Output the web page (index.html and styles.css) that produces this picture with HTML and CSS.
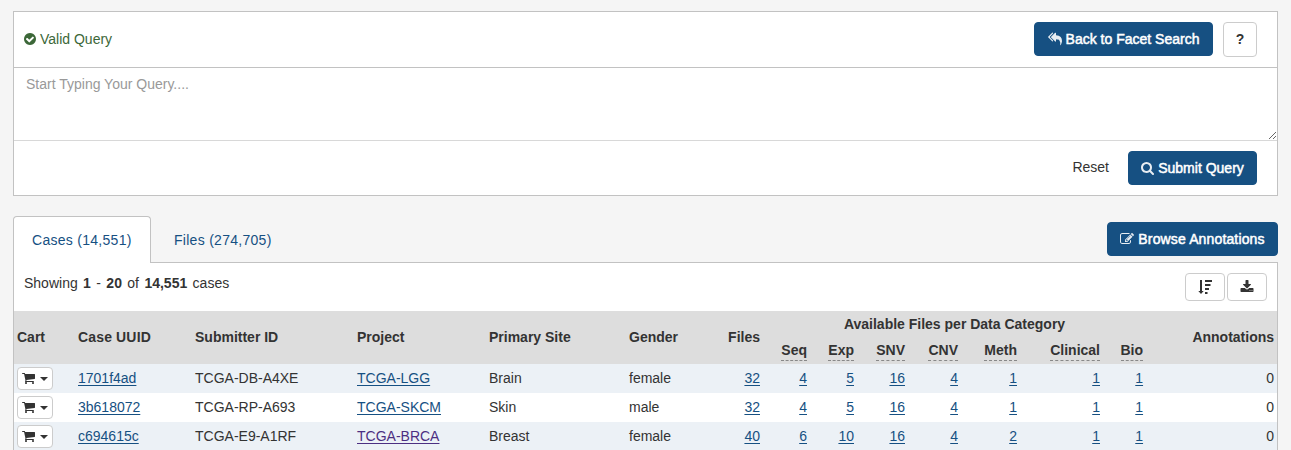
FILE: index.html
```html
<!DOCTYPE html>
<html lang="en">
<head>
<meta charset="utf-8">
<title>Advanced Search</title>
<link rel="stylesheet" href="styles.css">
</head>
<body>
<svg class="defs" aria-hidden="true">
  <symbol id="check" viewBox="128 128 1536 1536"><path d="M1412 734q0-28-18-46l-91-90q-19-19-45-19t-45 19l-408 407-226-226q-19-19-45-19t-45 19l-91 90q-18 18-18 46 0 27 18 45l362 362q19 19 45 19 27 0 46-19l543-543q18-18 18-45zm252 162q0 209-103 385.5t-279.5 279.5-385.5 103-385.5-103-279.5-279.5-103-385.5 103-385.5 279.5-279.5 385.5-103 385.5 103 279.5 279.5 103 385.5z"/></symbol>
  <symbol id="reply-all" viewBox="0 0 1792 1792"><path d="M640 1082v70q0 42-39 59-13 5-25 5-27 0-45-19l-512-512q-19-19-19-45t19-45l512-512q29-31 70-14 39 17 39 59v69l-397 398q-19 19-19 45t19 45zm1152 58q0 58-17 133.5t-38.5 138-48 125-40.5 90.5l-20 40q-8 17-28 17-6 0-9-1-25-8-23-34 43-400-106-565-64-71-170.5-110.5t-267.5-52.5v251q0 42-39 59-13 5-25 5-27 0-45-19l-512-512q-19-19-19-45t19-45l512-512q29-31 70-14 39 17 39 59v262q411 28 599 221 169 173 169 509z"/></symbol>
  <symbol id="search" viewBox="64 128 1664 1664"><path d="M1216 832q0-185-131.5-316.5t-316.5-131.5-316.5 131.5-131.5 316.5 131.5 316.5 316.5 131.5 316.5-131.5 131.5-316.5zm512 832q0 52-38 90t-90 38q-54 0-90-38l-343-342q-179 124-399 124-143 0-273.5-55.5t-225-150-150-225-55.5-273.5 55.5-273.5 150-225 225-150 273.5-55.5 273.5 55.5 225 150 150 225 55.5 273.5q0 220-124 399l343 343q37 37 37 90z"/></symbol>
  <symbol id="edit" viewBox="0 0 1792 1792"><path d="M888 1184l116-116-152-152-116 116v56h96v96h56zm440-720q-16-16-33 1l-350 350q-17 17-1 33t33-1l350-350q17-17 1-33zm80 594v190q0 119-84.5 203.5t-203.5 84.5h-832q-119 0-203.5-84.5t-84.5-203.5v-832q0-119 84.5-203.5t203.5-84.5h832q63 0 117 25 15 7 18 23 3 17-9 29l-49 49q-14 14-32 8-23-6-45-6h-832q-66 0-113 47t-47 113v832q0 66 47 113t113 47h832q66 0 113-47t47-113v-126q0-13 9-22l64-64q15-15 35-7t20 29zm-96-738l288 288-672 672h-288v-288zm444 132l-92 92-288-288 92-92q28-28 68-28t68 28l152 152q28 28 28 68t-28 68z"/></symbol>
  <symbol id="download" viewBox="0 0 1792 1792"><path d="M1344 1344q0-26-19-45t-45-19-45 19-19 45 19 45 45 19 45-19 19-45zm256 0q0-26-19-45t-45-19-45 19-19 45 19 45 45 19 45-19 19-45zm128-224v320q0 40-28 68t-68 28h-1472q-40 0-68-28t-28-68v-320q0-40 28-68t68-28h465l135 136q58 56 136 56t136-56l136-136h464q40 0 68 28t28 68zm-325-569q17 41-14 70l-448 448q-18 19-45 19t-45-19l-448-448q-31-29-14-70 17-39 59-39h256v-448q0-26 19-45t45-19h256q26 0 45 19t19 45v448h256q42 0 59 39z"/></symbol>
  <symbol id="sort" viewBox="0 0 14 14"><path d="M2 0h2v11h1.7L3 14 .3 11H2zM7 0h7v2H7zM7 4h5.5v2H7zM7 8h4v2H7zM7 12h2.5v2H7z"/></symbol>
  <symbol id="cart" viewBox="64 256 1664 1408"><path d="M704 1536q0 52-38 90t-90 38-90-38-38-90 38-90 90-38 90 38 38 90zm896 0q0 52-38 90t-90 38-90-38-38-90 38-90 90-38 90 38 38 90zm128-1088v512q0 24-16.5 42.5t-40.5 21.5l-1044 122q13 60 13 70 0 16-24 64h920q26 0 45 19t19 45-19 45-45 19h-1024q-26 0-45-19t-19-45q0-11 8-31.5t16-36 21.5-40 15.5-29.5l-177-823h-204q-26 0-45-19t-19-45 19-45 45-19h256q16 0 28.5 6.5t19.5 15.5 13 24.5 8 26 5.5 29.5 4.5 26h1201q26 0 45 19t19 45z"/></symbol>
</svg>

<section class="query">
  <div class="query-head">
    <span class="valid"><svg class="icon i12"><use href="#check"/></svg><span>Valid Query</span></span>
    <div class="actions">
      <button class="btn primary back"><svg class="icon i14"><use href="#reply-all"/></svg><span>Back to Facet Search</span></button>
      <button class="btn help">?</button>
    </div>
  </div>
  <textarea class="query-input" placeholder="Start Typing Your Query...."></textarea>
  <div class="query-foot">
    <span class="reset">Reset</span>
    <button class="btn primary submit"><svg class="icon i13"><use href="#search"/></svg><span>Submit Query</span></button>
  </div>
</section>

<nav class="tabs">
  <a class="tab active">Cases (14,551)</a>
  <a class="tab">Files (274,705)</a>
  <button class="btn primary browse"><svg class="icon i14"><use href="#edit"/></svg><span>Browse Annotations</span></button>
</nav>

<section class="panel">
  <div class="panel-head">
    <span class="showing">Showing <b>1</b> - <b>20</b> of <b>14,551</b> cases</span>
    <div class="tools">
      <button class="btn tool"><svg class="icon i14"><use href="#sort"/></svg></button>
      <button class="btn tool"><svg class="icon i14"><use href="#download"/></svg></button>
    </div>
  </div>
  <table class="cases">
    <colgroup><col class="c1"><col class="c2"><col class="c3"><col class="c4"><col class="c5"><col class="c6"><col class="c7"><col class="c8"><col class="c9"><col class="c10"><col class="c11"><col class="c12"><col class="c13"><col class="c14"><col class="c15"></colgroup>
    <thead>
      <tr class="h1"><th rowspan="2">Cart</th><th rowspan="2" class="uuid">Case UUID</th><th rowspan="2">Submitter ID</th><th rowspan="2">Project</th><th rowspan="2">Primary Site</th><th rowspan="2">Gender</th><th rowspan="2" class="num">Files</th><th colspan="7" class="group">Available Files per Data Category</th><th rowspan="2" class="num">Annotations</th></tr>
      <tr class="h2"><th class="num"><abbr>Seq</abbr></th><th class="num"><abbr>Exp</abbr></th><th class="num"><abbr>SNV</abbr></th><th class="num"><abbr>CNV</abbr></th><th class="num"><abbr>Meth</abbr></th><th class="num"><abbr>Clinical</abbr></th><th class="num"><abbr>Bio</abbr></th></tr>
    </thead>
    <tbody>
      <tr><td class="cart-cell"><button class="btn cart"><svg class="icon cart-icon"><use href="#cart"/></svg><i class="caret"></i></button></td><td><a>1701f4ad</a></td><td>TCGA-DB-A4XE</td><td><a>TCGA-LGG</a></td><td>Brain</td><td>female</td><td class="num"><a>32</a></td><td class="num"><a>4</a></td><td class="num"><a>5</a></td><td class="num"><a>16</a></td><td class="num"><a>4</a></td><td class="num"><a>1</a></td><td class="num"><a>1</a></td><td class="num"><a>1</a></td><td class="num">0</td></tr>
      <tr><td class="cart-cell"><button class="btn cart"><svg class="icon cart-icon"><use href="#cart"/></svg><i class="caret"></i></button></td><td><a>3b618072</a></td><td>TCGA-RP-A693</td><td><a>TCGA-SKCM</a></td><td>Skin</td><td>male</td><td class="num"><a>32</a></td><td class="num"><a>4</a></td><td class="num"><a>5</a></td><td class="num"><a>16</a></td><td class="num"><a>4</a></td><td class="num"><a>1</a></td><td class="num"><a>1</a></td><td class="num"><a>1</a></td><td class="num">0</td></tr>
      <tr><td class="cart-cell"><button class="btn cart"><svg class="icon cart-icon"><use href="#cart"/></svg><i class="caret"></i></button></td><td><a>c694615c</a></td><td>TCGA-E9-A1RF</td><td><a class="visited">TCGA-BRCA</a></td><td>Breast</td><td>female</td><td class="num"><a>40</a></td><td class="num"><a>6</a></td><td class="num"><a>10</a></td><td class="num"><a>16</a></td><td class="num"><a>4</a></td><td class="num"><a>2</a></td><td class="num"><a>1</a></td><td class="num"><a>1</a></td><td class="num">0</td></tr>
    </tbody>
  </table>
</section>
</body>
</html>
```
FILE: styles.css
```css
* { box-sizing: border-box; }
html, body { height: 450px; overflow: hidden; }
body {
  margin: 0;
  padding: 11px 13px 0;
  background: #f5f5f5;
  color: #333;
  font: 14px/20px "Helvetica Neue", "Liberation Sans", Arial, sans-serif;
}
.defs { display: none; }
.icon { display: block; fill: currentColor; flex: none; }
.i12 { width: 12px; height: 12px; }
.i13 { width: 13px; height: 13px; }
.i14 { width: 14px; height: 14px; }
.btn {
  display: flex;
  align-items: center;
  justify-content: center;
  margin: 0;
  padding: 0;
  height: 34px;
  border: 1px solid #ccc;
  border-radius: 4px;
  background: #fff;
  color: #333;
  font: inherit;
  white-space: nowrap;
}
.primary {
  border-color: #165082;
  background: #165082;
  color: #fff;
  gap: 4px;
  -webkit-text-stroke: 0.5px #fff;
}
.primary .icon { opacity: 0.9; stroke: none; -webkit-text-stroke: 0; }

.query {
  height: 185px;
  border: 1px solid #c2c2c2;
  background: #fff;
}
.query-head {
  display: flex;
  align-items: center;
  justify-content: space-between;
  height: 56px;
  padding: 0 20px 0 10px;
  border-bottom: 1px solid #c2c2c2;
}
.valid {
  display: flex;
  align-items: center;
  gap: 4px;
  padding-bottom: 2px;
  color: #3c6738;
}
.actions { display: flex; gap: 10px; }
.back { width: 179px; }
.help { width: 34px; height: 35px; padding-bottom: 2px; font-weight: bold; }
.query-input {
  display: block;
  width: 100%;
  height: 73px;
  padding: 6px 12px;
  border: 0;
  border-bottom: 1px solid #d8d8d8;
  outline: 0;
  background: #fff;
  font: inherit;
  resize: vertical;
}
.query-input::placeholder { color: #999; opacity: 1; }
.query-foot {
  display: flex;
  align-items: center;
  justify-content: flex-end;
  gap: 19px;
  height: 54px;
  padding-right: 20px;
}
.reset { padding-bottom: 2px; }
.submit { width: 129px; }

.tabs {
  display: flex;
  align-items: flex-end;
  height: 67px;
  padding-top: 20px;
}
.tab {
  display: flex;
  align-items: center;
  height: 47px;
  padding-left: 23px;
  color: #165082;
  letter-spacing: 0.28px;
}
.tab.active {
  position: relative;
  width: 138px;
  padding: 0 0 1px 18px;
  border: 1px solid #c2c2c2;
  border-bottom: 0;
  border-radius: 4px 4px 0 0;
  background: #fff;
}
.browse { width: 171px; margin: 0 0 7px auto; letter-spacing: 0.14px; }

.panel {
  height: 200px;
  margin-top: -1px;
  border: 1px solid #c2c2c2;
  border-bottom: 0;
  background: #fff;
}
.panel-head {
  display: flex;
  justify-content: space-between;
  height: 48px;
  padding: 10px 10px 0;
}
.showing { word-spacing: 1.5px; }
.tools { display: flex; gap: 2px; }
.tool { width: 40px; height: 28px; }

.cases { width: 1263px; table-layout: fixed; border-collapse: collapse; }
.c1 { width: 61px; } .c2 { width: 117px; } .c3 { width: 162px; }
.c4 { width: 132px; } .c5 { width: 140px; } .c6 { width: 74px; }
.c7 { width: 63px; } .c8 { width: 47px; } .c9 { width: 47px; }
.c10 { width: 51px; } .c11 { width: 53px; } .c12 { width: 59px; }
.c13 { width: 83px; } .c14 { width: 43px; } .c15 { width: 131px; }
.cases th, .cases td {
  padding: 0 3px 2px;
  text-align: left;
  white-space: nowrap;
}
.cases thead { background: #ddd; }
.h1 { height: 26px; }
.h2 { height: 27px; }
.cases .num { text-align: right; }
.cases .group { padding-bottom: 0; text-align: center; }
.cases .uuid { letter-spacing: 0.15px; }
.cases abbr {
  display: inline-block;
  height: 21px;
  border-bottom: 1px dashed #888;
}
.cases .h2 th { vertical-align: top; padding: 3px 3px 0; }
.cases tbody tr { height: 29px; }
.cases tbody tr:nth-child(odd) { background: #ecf1f6; }
.cases .cart-cell { padding-bottom: 0; }
.cases a { color: #165082; text-decoration: underline; text-underline-offset: 2px; }
.cases a.visited { color: #4c2f82; }
.cart { width: 36px; height: 23px; gap: 5px; }
.cart-icon { width: 13px; height: 11px; }
.caret {
  width: 0;
  border: 4px solid transparent;
  border-top-color: #333;
  border-bottom: 0;
}
```
